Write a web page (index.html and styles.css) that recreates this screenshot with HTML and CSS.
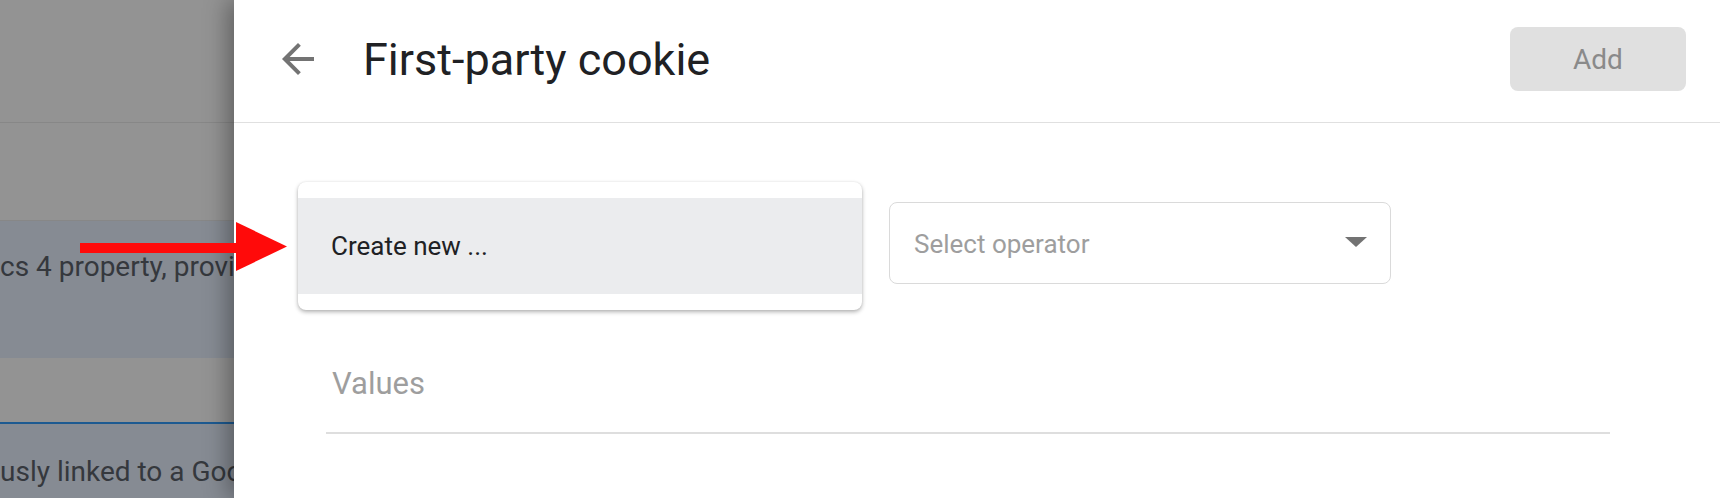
FILE: index.html
```html
<!DOCTYPE html>
<html lang="en">
<head>
    <meta charset="UTF-8">
    <meta name="viewport" content="width=device-width, initial-scale=1.0">
    <title>First-party cookie</title>
    <link rel="stylesheet" href="styles.css">
</head>
<body>
    <div class="screen">
        <!-- page behind the side sheet, dimmed by the scrim -->
        <div class="backdrop">
            <div class="bd-block bd-top"></div>
            <div class="bd-block bd-gap"></div>
            <div class="bd-row bd-row-first">cs 4 property, providing data</div>
            <div class="bd-block bd-gap-blue"></div>
            <div class="bd-row bd-row-second">usly linked to a Google</div>
        </div>

        <div class="panel">
            <div class="panel-header">
                <span class="back-btn">
                    <svg viewBox="0 0 24 24" width="48" height="48">
                        <path d="M20 11H7.83l5.59-5.59L12 4l-8 8 8 8 1.41-1.41L7.83 13H20v-2z"/>
                    </svg>
                </span>
                <h1 class="panel-title">First-party cookie</h1>
                <button class="btn-add" disabled>Add</button>
            </div>

            <div class="panel-body">
                <div class="condition-row">
                    <div class="menu">
                        <div class="menu-item">Create new ...</div>
                    </div>
                    <div class="select">
                        <span class="select-placeholder">Select operator</span>
                        <span class="select-caret"></span>
                    </div>
                </div>

                <div class="values-field">
                    <span class="values-label">Values</span>
                </div>
            </div>
        </div>

        <svg class="callout-arrow" width="208" height="50" viewBox="0 0 208 50">
            <rect x="0" y="21" width="158" height="10" fill="#ff0a0a"/>
            <polygon points="156,0 207,24.5 156,49" fill="#ff0a0a"/>
        </svg>
    </div>
</body>
</html>
```

FILE: styles.css
```css
html, body {
    margin: 0;
    padding: 0;
}
body {
    font-family: Roboto, "Noto Sans", sans-serif;
    background: #fff;
    overflow: hidden;
}
.screen {
    position: relative;
    display: flex;
    width: 1720px;
    height: 498px;
    overflow: hidden;
}

/* dimmed page */
.backdrop {
    width: 234px;
    flex-shrink: 0;
    display: flex;
    flex-direction: column;
    background: #939393;
}
.bd-top {
    height: 122px;
    border-bottom: 1px solid #878787;
}
.bd-gap {
    height: 97px;
    border-bottom: 1px solid #878787;
}
.bd-gap-blue {
    height: 64px;
    border-bottom: 2px solid #1d5a91;
}
.bd-row {
    background: #868b93;
    color: #35383d;
    font-size: 28px;
    line-height: 40px;
    white-space: nowrap;
    overflow: hidden;
}
.bd-row-first {
    height: 111px;
    padding-top: 26px;
}
.bd-row-second {
    flex: 1;
    padding-top: 28px;
}

/* side sheet */
.panel {
    flex: 1;
    background: #fff;
    box-shadow: -6px 0 22px rgba(0, 0, 0, 0.35);
    z-index: 1;
}
.panel-header {
    height: 122px;
    display: flex;
    align-items: center;
    padding: 0 34px 0 40px;
    border-bottom: 1px solid #e0e0e0;
}
.back-btn {
    display: flex;
    width: 48px;
    height: 48px;
    margin-right: 41px;
    margin-top: -4px;
}
.back-btn svg {
    fill: #737373;
}
.panel-title {
    flex: 1;
    margin: 0 0 4px;
    font-size: 45px;
    font-weight: 400;
    color: #202124;
}
.btn-add {
    width: 176px;
    height: 64px;
    margin-top: -4px;
    border: none;
    border-radius: 8px;
    background: #e0e0e0;
    color: #8a8a8a;
    font-family: Roboto, sans-serif;
    font-size: 28px;
    font-weight: 400;
}

.panel-body {
    padding: 59px 0 0 64px;
}
.condition-row {
    display: flex;
    align-items: flex-start;
}
.menu {
    width: 564px;
    padding: 16px 0;
    background: #fff;
    border-radius: 8px;
    box-shadow: 0 2px 4px rgba(0, 0, 0, 0.3), 0 0 2px rgba(0, 0, 0, 0.08);
}
.menu-item {
    height: 96px;
    display: flex;
    align-items: center;
    padding-left: 33px;
    background: #ebecee;
    color: #202124;
    font-size: 26px;
}
.select {
    box-sizing: border-box;
    width: 502px;
    height: 82px;
    margin: 20px 0 0 27px;
    padding: 0 23px 0 24px;
    display: flex;
    align-items: center;
    justify-content: space-between;
    border: 1px solid #dadada;
    border-radius: 8px;
}
.select-placeholder {
    font-size: 26px;
    color: #9e9e9e;
    margin-top: 1px;
}
.select-caret {
    width: 0;
    height: 0;
    border-left: 11px solid transparent;
    border-right: 11px solid transparent;
    border-top: 10px solid #737373;
    margin-top: -3px;
}

.values-field {
    width: 1284px;
    margin: 56px 0 0 28px;
    padding: 0 0 30px 6px;
    box-sizing: border-box;
    border-bottom: 2px solid #dedede;
}
.values-label {
    display: block;
    font-size: 31px;
    line-height: 36px;
    color: #9e9e9e;
}

/* red annotation arrow over the screenshot */
.callout-arrow {
    position: absolute;
    left: 80px;
    top: 222px;
    z-index: 2;
}
```
